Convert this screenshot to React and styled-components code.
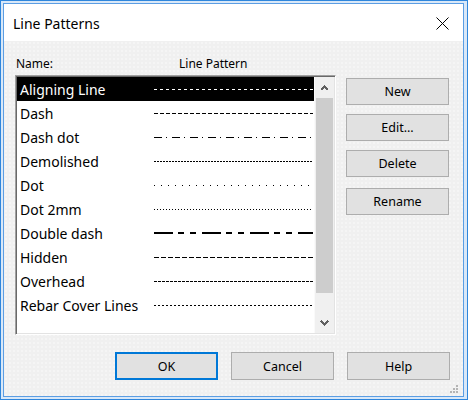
import styled, { createGlobalStyle } from 'styled-components'

const GlobalStyle = createGlobalStyle`
  html, body {
    margin: 0;
    padding: 0;
    background: #ffffff;
  }
  * { box-sizing: border-box; }
`

const patterns = [
  { name: 'Aligning Line', dash: [3, 3], selected: true },
  { name: 'Dash', dash: [4, 2] },
  { name: 'Dash dot', dash: [8, 4, 1, 5] },
  { name: 'Demolished', dash: [2, 1] },
  { name: 'Dot', dash: [1, 6] },
  { name: 'Dot 2mm', dash: [1, 2] },
  { name: 'Double dash', dash: [19, 5, 6, 6, 6, 6], weight: 2 },
  { name: 'Hidden', dash: [5, 2] },
  { name: 'Overhead', dash: [3, 1] },
  { name: 'Rebar Cover Lines', dash: [2, 2] },
]

const LINE_W = 159

// turn a dash list into the rectangles of one line
const segments = (dash) => {
  const out = []
  let x = 0
  let i = 0
  while (x < LINE_W) {
    const len = dash[i % dash.length]
    if (i % 2 === 0) out.push([x, Math.min(len, LINE_W - x)])
    x += len
    i++
  }
  return out
}

const PatternLine = ({ dash, weight = 1, color }) => (
  <svg width={LINE_W} height="4" shapeRendering="crispEdges">
    {segments(dash).map(([x, w]) => (
      <rect key={x} x={x} y={weight === 2 ? 1 : 2} width={w} height={weight} fill={color} />
    ))}
  </svg>
)

const Chevron = ({ down }) => (
  <svg width="9" height="6" viewBox="0 0 9 6" shapeRendering="crispEdges">
    <polyline points={down ? '1,1 4.5,4.5 8,1' : '1,5 4.5,1.5 8,5'}
      fill="none" stroke="#606060" strokeWidth="2" />
  </svg>
)

const App = () => {
  return (
    <>
      <GlobalStyle />
      <Window>
        <Inner>
          <TitleBar>
            <span>Line Patterns</span>
            <svg width="13" height="13" viewBox="0 0 13 13">
              <path d="M0.5 0.5 L12.5 12.5 M12.5 0.5 L0.5 12.5" stroke="#000" strokeWidth="1" />
            </svg>
          </TitleBar>
          <Body>
            <Header>
              <Label>Name:</Label>
              <Label>Line Pattern</Label>
            </Header>
            <Main>
              <ListBox>
                <Rows>
                  {patterns.map((p) => (
                    <Row key={p.name} selected={p.selected}>
                      <span>{p.name}</span>
                      <PatternLine dash={p.dash} weight={p.weight} color={p.selected ? '#fff' : '#000'} />
                    </Row>
                  ))}
                </Rows>
                <ScrollBar>
                  <ArrowBox><Chevron /></ArrowBox>
                  <Thumb />
                  <Track />
                  <ArrowBox><Chevron down /></ArrowBox>
                </ScrollBar>
              </ListBox>
              <SideButtons>
                <Button>New</Button>
                <Button>Edit...</Button>
                <Button>Delete</Button>
                <Button spaced>Rename</Button>
              </SideButtons>
            </Main>
            <Footer>
              <Button primary>OK</Button>
              <Button>Cancel</Button>
              <Button>Help</Button>
            </Footer>
            <Grip width="9" height="9" viewBox="0 0 9 9">
              <rect x="6" y="0" width="2" height="2" fill="#b4b4b4" />
              <rect x="3" y="3" width="2" height="2" fill="#b4b4b4" />
              <rect x="6" y="3" width="2" height="2" fill="#b4b4b4" />
              <rect x="0" y="6" width="2" height="2" fill="#b4b4b4" />
              <rect x="3" y="6" width="2" height="2" fill="#b4b4b4" />
              <rect x="6" y="6" width="2" height="2" fill="#b4b4b4" />
            </Grip>
          </Body>
        </Inner>
      </Window>
    </>
  )
}

export default App

const Window = styled.div`
  width: 468px;
  height: 400px;
  border: 1px solid #2f86dc;
  padding: 2px 3px 2px 2px;
  background: #d9e8f8;
  font-family: "Segoe UI", "Noto Sans", "Open Sans", sans-serif;
  color: #000;
`

const Inner = styled.div`
  height: 100%;
  border: 1px solid #5b9de3;
  display: flex;
  flex-direction: column;
  background: #f0f0f0;
`

const TitleBar = styled.div`
  height: 37px;
  flex: none;
  background: #fff;
  display: flex;
  align-items: center;
  justify-content: space-between;
  padding: 1px 14px 0 9px;
  font-size: 14px;
`

const Body = styled.div`
  flex: 1;
  position: relative;
  padding: 11px 13px 0 11px;
  display: flex;
  flex-direction: column;
  background-color: #f0f0f0;
  background-image: radial-gradient(circle, rgba(255,255,255,0.7) 0.6px, transparent 0.8px);
  background-size: 4px 4px;
`

const Header = styled.div`
  height: 23px;
  display: grid;
  grid-template-columns: 163px auto;
  padding-left: 1px;
  align-items: center;
`

const Label = styled.span`
  font-size: 12px;
`

const Main = styled.div`
  display: flex;
  gap: 10px;
`

const ListBox = styled.div`
  width: 321px;
  height: 260px;
  display: flex;
  background: #fff;
  border-top: 1px solid #a0a0a0;
  border-left: 1px solid #a0a0a0;
  border-right: 1px solid #fff;
  border-bottom: 1px solid #fff;
  box-shadow: inset 1px 1px 0 #696969, inset -1px -1px 0 #e3e3e3;
  padding: 1px;
`

const Rows = styled.div`
  flex: 1;
  display: flex;
  flex-direction: column;
`

const Row = styled.div`
  height: 24px;
  display: grid;
  grid-template-columns: 134px ${LINE_W}px;
  align-items: center;
  padding-left: 3px;
  font-size: 14px;
  background: ${p => p.selected ? '#000' : 'transparent'};
  color: ${p => p.selected ? '#fff' : '#000'};
  & > svg { display: block; }
`

const ScrollBar = styled.div`
  width: 20px;
  display: flex;
  flex-direction: column;
  align-items: center;
  background: #f0f0f0;
  border-left: 1px solid #fafafa;
`

const ArrowBox = styled.div`
  height: 21px;
  width: 100%;
  display: flex;
  align-items: center;
  justify-content: center;
`

const Thumb = styled.div`
  width: 17px;
  height: 195px;
  background: #cdcdcd;
`

const Track = styled.div`
  flex: 1;
`

const SideButtons = styled.div`
  display: flex;
  flex-direction: column;
  gap: 9px;
  padding-top: 3px;
`

const Button = styled.button`
  width: 103px;
  height: 27px;
  flex: none;
  font-family: inherit;
  font-size: 12.5px;
  color: #000;
  background: #e1e1e1;
  border: ${p => p.primary ? '2px solid #0078d7' : '1px solid #adadad'};
  margin-top: ${p => p.spaced ? '2px' : '0'};
  padding: 0;
`

const Footer = styled.div`
  display: flex;
  justify-content: flex-end;
  gap: 13px;
  margin-top: 17px;
  & > button { height: 28px; }
`

const Grip = styled.svg`
  position: absolute;
  right: 4px;
  bottom: 2px;
`
